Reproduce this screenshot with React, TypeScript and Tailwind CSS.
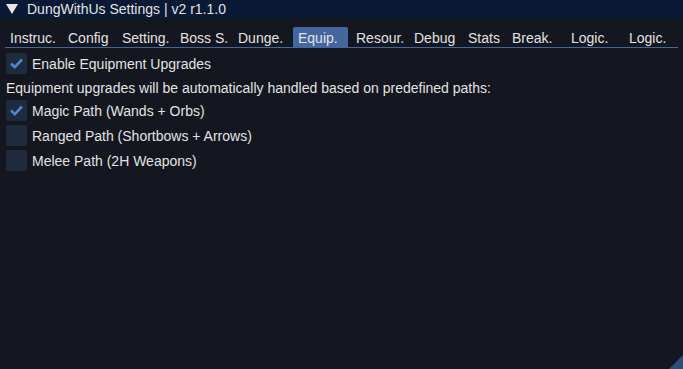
import { useState } from 'react'

// タブ定義（幅は参照画像から測定）
const tabs = [
  { label: 'Instruc.', w: 55 },
  { label: 'Config', w: 51 },
  { label: 'Setting.', w: 55 },
  { label: 'Boss S.', w: 55 },
  { label: 'Dunge.', w: 57 },
  { label: 'Equip.', w: 55 },
  { label: 'Resour.', w: 55 },
  { label: 'Debug', w: 51 },
  { label: 'Stats', w: 41 },
  { label: 'Break.', w: 56 },
  { label: 'Logic.', w: 55 },
  { label: 'Logic.', w: 55 },
]

const CheckRow = ({ label, checked, onToggle }: { label: string; checked: boolean; onToggle: () => void }) => (
  <button type="button" onClick={onToggle} className="flex items-center gap-[5px] h-[21px] text-left">
    <span className="w-[21px] h-[21px] rounded-[2px] bg-[#1f2a3c] flex items-center justify-center">
      {checked && (
        <svg width="15" height="15" viewBox="0 0 15 15">
          <path d="M2 7.5 L5.8 11.2 L13 3.5" fill="none" stroke="#4d86d0" strokeWidth="2.6" />
        </svg>
      )}
    </span>
    <span className="pt-[2px]">{label}</span>
  </button>
)

export default function App() {
  const [active, setActive] = useState(5)
  const [enable, setEnable] = useState(true)
  const [paths, setPaths] = useState([true, false, false])

  const togglePath = (i: number) => setPaths((p) => p.map((v, j) => (j === i ? !v : v)))

  return (
    <main
      className="relative w-[683px] h-[369px] overflow-hidden bg-[#14171f] text-[#e2e2e2] text-[14px] leading-[17px]"
      style={{ fontFamily: '"Liberation Sans", Arial, sans-serif' }}
    >
      {/* タイトルバー */}
      <div className="h-[18px] bg-[#0b1a34] flex items-center">
        <svg width="12" height="10" viewBox="0 0 12 10" className="ml-[6px] mr-[9px]">
          <path d="M0 0 L12 0 L6 10 Z" fill="#e6e6e6" />
        </svg>
        <span>DungWithUs Settings | v2 r1.1.0</span>
      </div>

      <div className="px-[5px]">
        {/* タブバー */}
        <div className="mt-[9px] flex gap-[3px] border-b border-[#4267a0]">
          {tabs.map((t, i) => (
            <button
              type="button"
              key={i}
              onClick={() => setActive(i)}
              style={{ width: t.w }}
              className={`h-[20px] shrink-0 pl-[5px] pt-[2px] text-left rounded-t-[2px] ${
                active === i ? 'bg-[#4467a0]' : ''
              }`}
            >
              {t.label}
            </button>
          ))}
        </div>

        {/* 内容 */}
        <div className="mt-[5px] pl-px flex flex-col gap-[4px] items-start">
          <CheckRow label="Enable Equipment Upgrades" checked={enable} onToggle={() => setEnable(!enable)} />
          <p className="h-[18px] pt-[2px]">Equipment upgrades will be automatically handled based on predefined paths:</p>
          <CheckRow label="Magic Path (Wands + Orbs)" checked={paths[0]} onToggle={() => togglePath(0)} />
          <CheckRow label="Ranged Path (Shortbows + Arrows)" checked={paths[1]} onToggle={() => togglePath(1)} />
          <CheckRow label="Melee Path (2H Weapons)" checked={paths[2]} onToggle={() => togglePath(2)} />
        </div>
      </div>

      {/* リサイズグリップ */}
      <svg width="14" height="14" viewBox="0 0 14 14" className="absolute right-0 bottom-0">
        <path d="M14 0 L14 14 L0 14 Z" fill="#2b4d7c" />
      </svg>
    </main>
  )
}
